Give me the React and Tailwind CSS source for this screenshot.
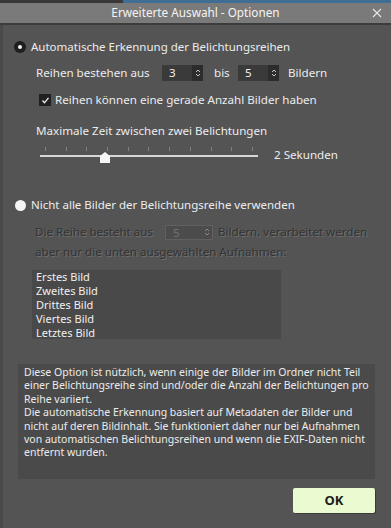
import React from "react";

const font = { fontFamily: '"Noto Sans", "Open Sans", sans-serif' };

function Spin({ value, disabled, width }) {
  return (
    <div
      className={`flex items-stretch ${disabled ? "h-[15px] border border-[#606060] bg-[#4c4c4c]" : "h-[16px] bg-[#3a3a3a]"}`}
      style={{ width }}
    >
      <div
        className={`flex-1 text-[11.5px] ${disabled ? "pl-[7px] leading-[13px] text-[#737373]" : "pl-[7px] leading-[15px] text-[#f0f0f0]"}`}
        style={{ textShadow: "none" }}
      >
        {value}
      </div>
      <div className={`flex w-[11px] items-center justify-center ${disabled ? "" : "bg-[#2c2c2c]"}`}>
        <svg width="6" height="10" viewBox="0 0 6 10" fill="none" stroke={disabled ? "#8c8c8c" : "#c8c8c8"} strokeWidth="1">
          <path d="M1 4 L3 2 L5 4" />
          <path d="M1 6 L3 8 L5 6" />
        </svg>
      </div>
    </div>
  );
}

export default function App() {
  const ticks = Array.from({ length: 11 }, (_, i) => i);
  return (
    <div className="relative h-[528px] w-[391px] overflow-hidden bg-[#545454] text-[#ececec]" style={font}>
      <div className="flex h-[3px]">
        <div className="w-[123px] bg-[#383838]" />
        <div className="flex-1 bg-[#3f6d93]" />
      </div>
      <div className="relative flex h-[20px] items-center justify-center bg-[#7a7a7a] text-[11.75px] text-[#f4f4f4]">
        Erweiterte Auswahl - Optionen
        <svg className="absolute left-[372px] top-[5px]" width="10" height="10" viewBox="0 0 10 10" stroke="#e6e6e6" strokeWidth="1.1">
          <path d="M1 1 L9 9 M9 1 L1 9" />
        </svg>
      </div>
      <div className="h-[2px] bg-[#3c3c3c]" />
      <div className="flex h-[503px]">
        <div className="w-[3px] bg-[#4a4a4a]" />
        <div className="flex-1 text-[11.6px]">
          {/* Radio 1 */}
          <div className="mt-[14px] flex h-[16px] items-center pl-[11px]">
            <div className="flex h-[12px] w-[12px] items-center justify-center rounded-full bg-[#1e1e1e]">
              <div className="h-[4px] w-[4px] rounded-full bg-[#f2f2f2]" />
            </div>
            <span className="ml-[5px] text-[11.5px]">Automatische Erkennung der Belichtungsreihen</span>
          </div>
          {/* Row 2 */}
          <div className="mt-[10px] flex h-[16px] items-center pl-[33px]">
            <span className="w-[126px]">Reihen bestehen aus</span>
            <Spin value="3" width="41px" />
            <span className="ml-[11px] w-[24px]">bis</span>
            <Spin value="5" width="41px" />
            <span className="ml-[9px]">Bildern</span>
          </div>
          {/* Checkbox */}
          <div className="mt-[11px] flex h-[16px] items-center pl-[36px]">
            <div className="flex h-[12px] w-[12px] items-center justify-center bg-[#202020]">
              <svg width="9" height="9" viewBox="0 0 9 9" fill="none" stroke="#f0f0f0" strokeWidth="1.3">
                <path d="M1.5 4.5 L3.5 6.8 L7.5 1.8" />
              </svg>
            </div>
            <span className="ml-[4px]">Reihen können eine gerade Anzahl Bilder haben</span>
          </div>
          {/* Slider label */}
          <div className="mt-[15px] h-[16px] pl-[33px] leading-[16px]">Maximale Zeit zwischen zwei Belichtungen</div>
          {/* Slider */}
          <div className="mt-[2px] flex h-[24px] items-start pl-[37px]">
            <div className="relative h-[24px] w-[218px]">
              <div className="absolute left-[5px] right-[5px] top-[6px] flex justify-between">
                {ticks.map((t) => (
                  <div key={t} className="h-[4px] w-px bg-[#808080]" />
                ))}
              </div>
              <div className="absolute left-0 right-0 top-[14px] h-[2px] bg-[#d6d6d6]" />
              <svg className="absolute left-[60px] top-[11px]" width="10" height="11" viewBox="0 0 10 11">
                <path d="M0 4 L5 0 L10 4 L10 11 L0 11 Z" fill="#f6f6f6" />
              </svg>
            </div>
            <span className="ml-[16px] mt-[6px] leading-[16px]">2 Sekunden</span>
          </div>
          {/* Radio 2 */}
          <div className="mt-[32px] flex h-[16px] items-center pl-[12px]">
            <div className="h-[11px] w-[11px] rounded-full bg-[#f5f5f5]" />
            <span className="ml-[5px] text-[11.5px]">Nicht alle Bilder der Belichtungsreihe verwenden</span>
          </div>
          {/* Disabled text */}
          <div
            className="mt-[9px] pl-[32px] leading-[20px] text-[#333333]"
            style={{ textShadow: "1px 1px 0 #707070" }}
          >
            <div className="flex h-[20px] items-center">
              <span className="w-[130px]">Die Reihe besteht aus</span>
              <Spin value="5" disabled width="48px" />
              <span className="ml-[5px]">Bildern, verarbeitet werden</span>
            </div>
            <div className="h-[20px]">aber nur die unten ausgewählten Aufnahmen:</div>
          </div>
          {/* List */}
          <div className="ml-[29px] mt-[8px] h-[69px] w-[249px] bg-[#494949] pl-[4px] text-[11px] leading-[14px] text-[#f0f0f0]">
            <div>Erstes Bild</div>
            <div>Zweites Bild</div>
            <div>Drittes Bild</div>
            <div>Viertes Bild</div>
            <div>Letztes Bild</div>
          </div>
          {/* Info */}
          <div className="ml-[15px] mt-[25px] h-[115px] w-[357px] bg-[#4a4a4a] pl-[6px] pt-[2px] text-[10.5px] leading-[13.4px] text-[#ececec]">
            Diese Option ist nützlich, wenn einige der Bilder im Ordner nicht Teil einer Belichtungsreihe sind und/oder die Anzahl der Belichtungen pro Reihe variiert.
            <br />
            Die automatische Erkennung basiert auf Metadaten der Bilder und nicht auf deren Bildinhalt. Sie funktioniert daher nur bei Aufnahmen von automatischen Belichtungsreihen und wenn die EXIF-Daten nicht entfernt wurden.
          </div>
          {/* OK */}
          <div className="mt-[9px] flex justify-end pr-[16px]">
            <button className="h-[25px] w-[82px] rounded-[2px] bg-[#eafbd2] text-[13px] font-bold text-[#1c1c1c] shadow-[1px_1px_0_#3a3a3a]">
              OK
            </button>
          </div>
        </div>
      </div>
    </div>
  );
}
